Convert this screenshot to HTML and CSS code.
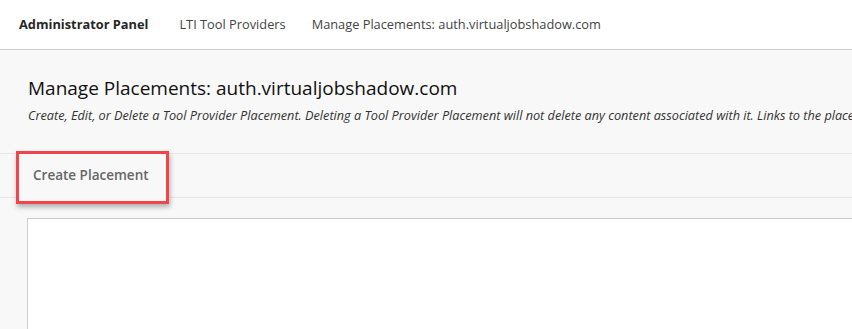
FILE: index.html
```html
<!DOCTYPE html>
<html lang="en">
<head>
    <meta charset="UTF-8">
    <meta name="viewport" content="width=device-width, initial-scale=1.0">
    <title>Manage Placements</title>
    <link rel="stylesheet" href="styles.css">
</head>
<body>
    <nav class="breadcrumbs">
        <a class="crumb crumb-root" href="#">Administrator Panel</a>
        <a class="crumb" href="#">LTI Tool Providers</a>
        <span class="crumb">Manage Placements: auth.virtualjobshadow.com</span>
    </nav>

    <main class="page">
        <div class="page-head">
            <h1>Manage Placements: auth.virtualjobshadow.com</h1>
            <p class="page-help">Create, Edit, or Delete a Tool Provider Placement. Deleting a Tool Provider Placement will not delete any content associated with it. Links to the placement will no longer work.</p>
        </div>

        <div class="action-bar">
            <button class="action-btn">Create Placement</button>
        </div>

        <div class="list-panel"></div>
    </main>
</body>
</html>
```

FILE: styles.css
```css
html, body {
    margin: 0;
    height: 100%;
}

body {
    font-family: "Open Sans", "Noto Sans", sans-serif;
    background: #f8f8f8;
    overflow: hidden;
}

.breadcrumbs {
    display: flex;
    align-items: center;
    height: 48px;
    padding-left: 19px;
    padding-bottom: 1px;
    background: #fff;
    border-bottom: 1px solid #cdcdcd;
    font-size: 12.8px;
}

.crumb {
    color: #444;
    text-decoration: none;
    margin-right: 26px;
    white-space: nowrap;
}

.crumb-root {
    color: #262626;
    font-weight: bold;
    margin-right: 31px;
}

.page {
    background: #f8f8f8;
}

.page-head {
    padding: 24px 28px 0;
    height: 79px;
    white-space: nowrap;
    overflow: hidden;
}

.page-head h1 {
    margin: 0;
    font-size: 19px;
    font-weight: normal;
    line-height: 28px;
    color: #111;
}

.page-help {
    margin: 4px 0 0;
    font-size: 12.7px;
    font-style: italic;
    color: #333;
}

.action-bar {
    display: flex;
    align-items: flex-start;
    height: 43px;
    border-top: 1px solid #e6e6e6;
    border-bottom: 1px solid #e6e6e6;
}

.action-btn {
    margin: -3px 0 -7px 16px;
    width: 153px;
    height: 53px;
    padding: 0 0 6px 14px;
    text-align: left;
    font-family: inherit;
    font-size: 13.5px;
    font-weight: 600;
    color: #666;
    background: #f8f8f8;
    border: 3px solid #f2454a;
    box-shadow: 1px 3px 5px rgba(0, 0, 0, 0.3);
    cursor: pointer;
    position: relative;
}

.list-panel {
    margin: 20px 0 0 27px;
    height: 110px;
    background: #fff;
    border-top: 1px solid #cccccc;
    border-left: 1px solid #cccccc;
}
```
